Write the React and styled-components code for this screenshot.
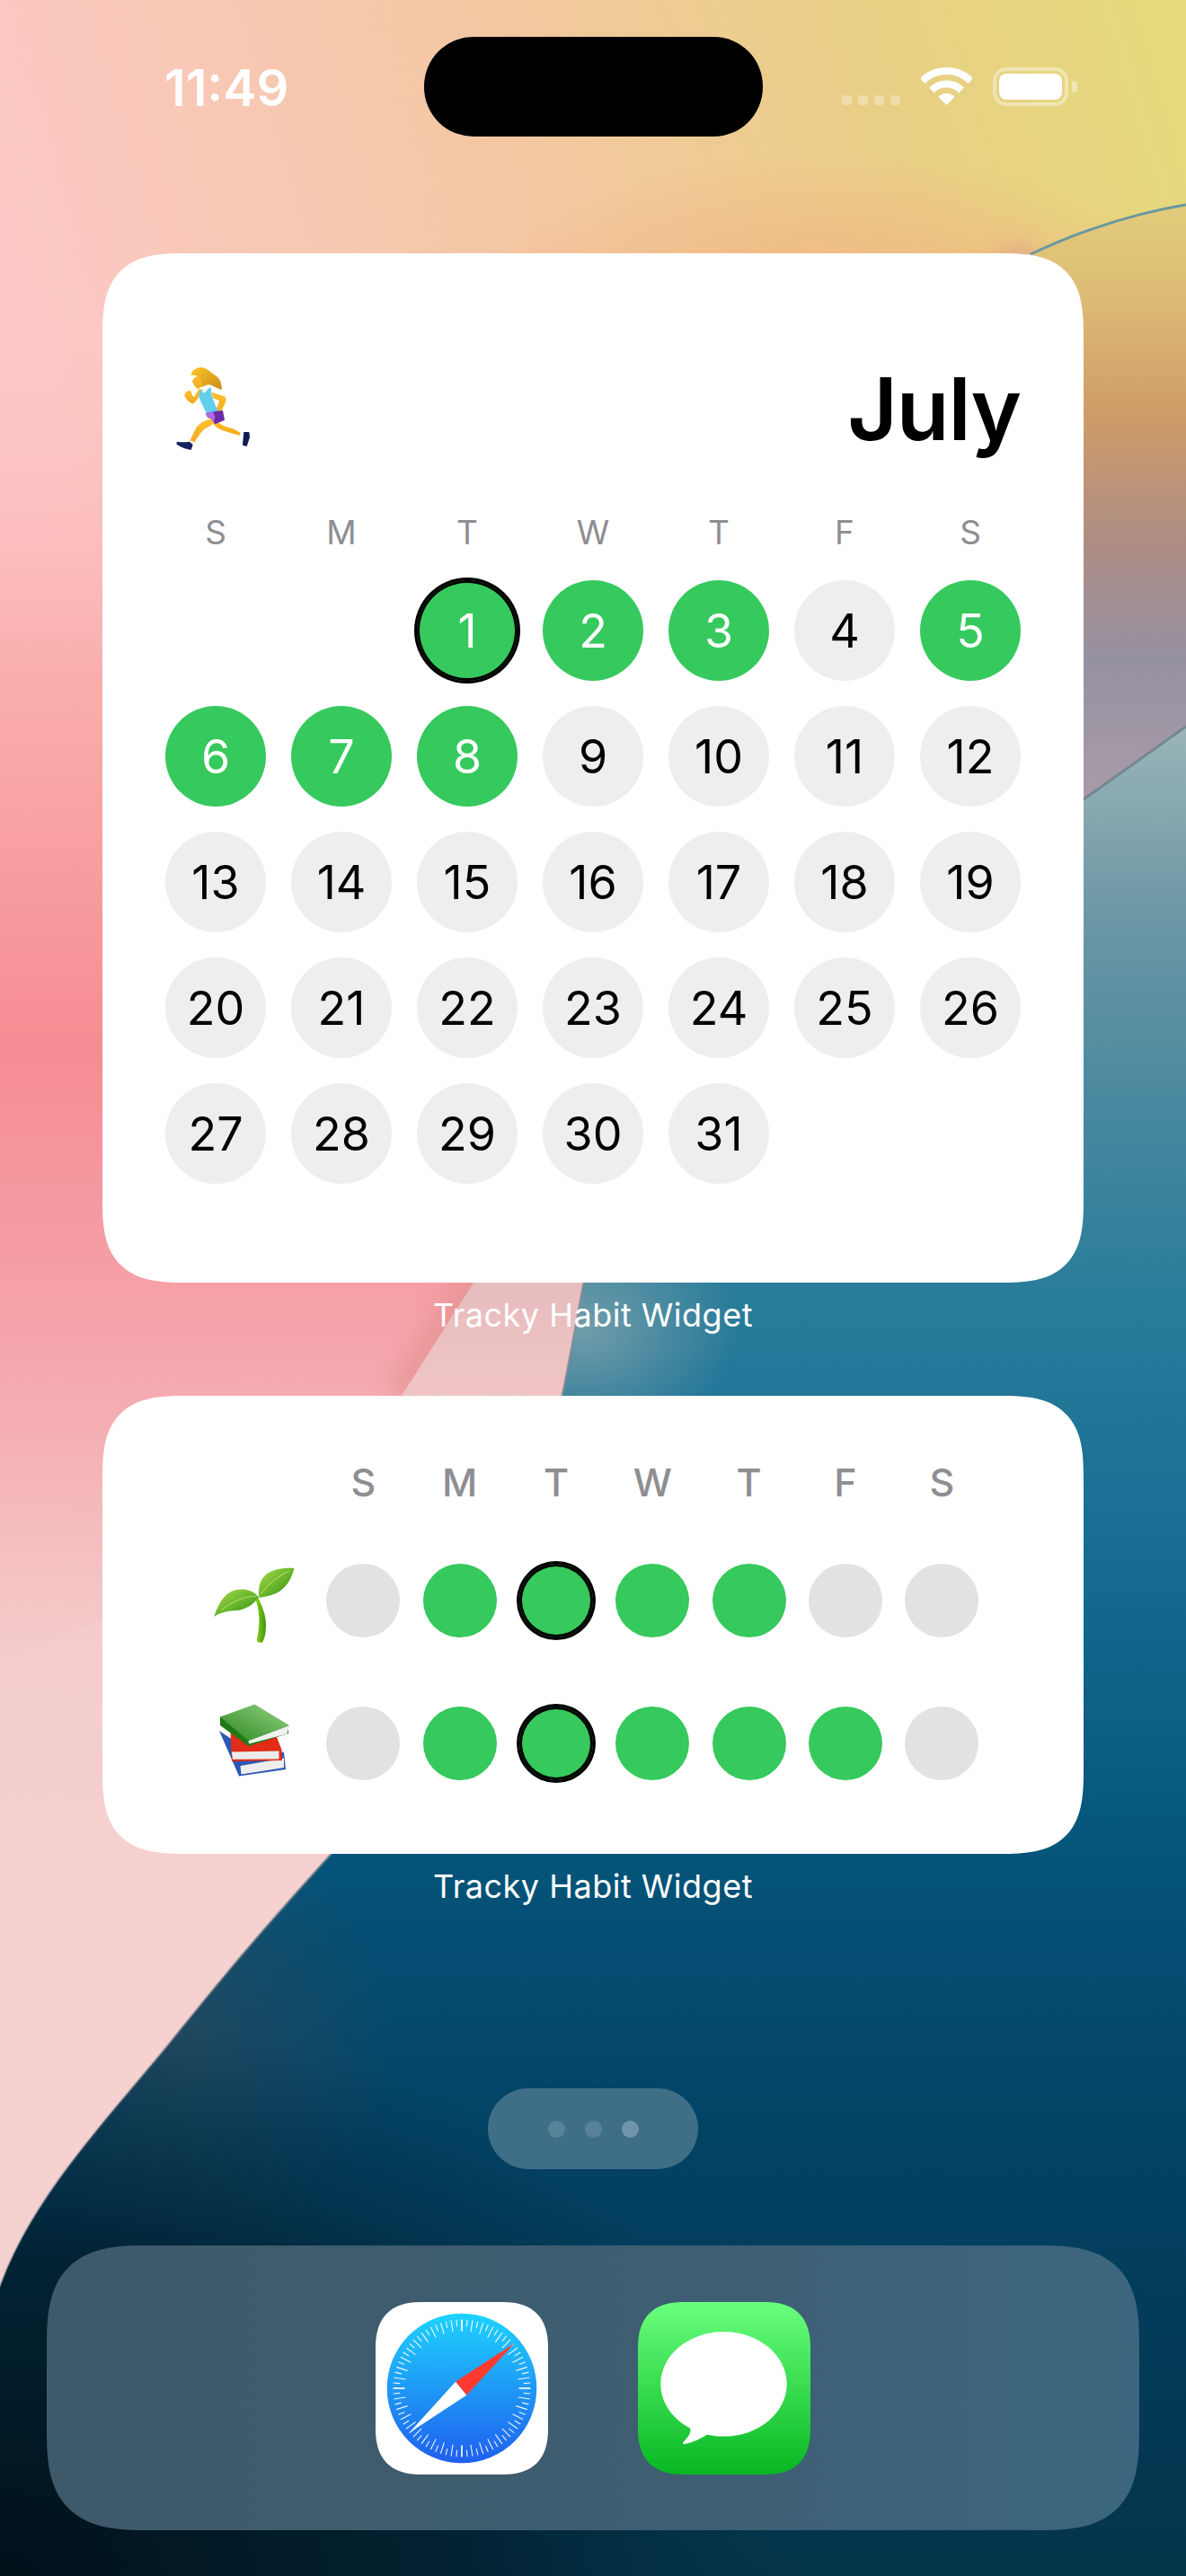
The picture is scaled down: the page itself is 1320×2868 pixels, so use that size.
import React from "react";
import styled, { createGlobalStyle, css } from "styled-components";

const GlobalStyle = createGlobalStyle`
  html, body { margin: 0; padding: 0; background: #000; }
  body { font-family: Inter, "Liberation Sans", sans-serif; }
`;

const Screen = styled.div`
  position: relative;
  width: 1320px;
  height: 2868px;
  overflow: hidden;
  display: flex;
  flex-direction: column;
  align-items: center;
  padding-top: 41px;
  box-sizing: border-box;
`;

const WallpaperSvg = styled.svg`
  position: absolute;
  inset: 0;
  width: 1320px;
  height: 2868px;
`;

const StatusBar = styled.div`
  position: relative;
  width: 1320px;
  height: 111px;
  display: grid;
  grid-template-columns: 1fr 377px 1fr;
`;

const Time = styled.div`
  padding: 32px 0 0 183px;
  font-size: 56px;
  line-height: 50px;
  font-weight: 600;
  color: #fff;
`;

const Island = styled.div`
  background: #000;
  border-radius: 55px;
`;

const StatusIcons = styled.div`
  display: flex;
  align-items: flex-end;
  justify-content: flex-end;
  padding: 0 121px 34px 0;
`;

const SignalBars = styled.div`
  display: flex;
  gap: 7px;
  margin-right: 23px;
  padding-bottom: 1px;
`;

const SignalBar = styled.span`
  width: 11px;
  height: 11px;
  border-radius: 3px;
  background: rgba(255, 255, 255, 0.3);
`;

const WifiIcon = styled.svg`
  width: 57px;
  height: 42px;
  margin-right: 23px;
  margin-bottom: 1px;
`;

const Battery = styled.div`
  position: relative;
  width: 84px;
  height: 43px;
  box-sizing: border-box;
  border: 4px solid rgba(255, 255, 255, 0.4);
  border-radius: 15px;
  padding: 3px;
  margin-right: 10px;
  &::after {
    content: "";
    position: absolute;
    right: -14px;
    top: 11px;
    width: 6px;
    height: 13px;
    border-radius: 0 4px 4px 0;
    background: rgba(255, 255, 255, 0.4);
  }
`;

const BatteryFill = styled.div`
  width: 100%;
  height: 100%;
  border-radius: 8px;
  background: #fff;
`;

const Widget = styled.section`
  position: relative;
  width: 1092px;
  box-sizing: border-box;
  background: #fff;
  border-radius: 80px;
  @supports (corner-shape: squircle) {
    border-radius: 92px;
    corner-shape: superellipse(1.5);
  }
`;

const CalendarWidget = styled(Widget)`
  height: 1146px;
  margin-top: 130px;
  padding: 118px 70px 0;
`;

const HabitWidget = styled(Widget)`
  height: 510px;
  padding: 71px 0 0 124px;
`;

const WidgetLabel = styled.div`
  position: relative;
  height: 126px;
  padding-top: 14px;
  box-sizing: border-box;
  font-size: 36px;
  line-height: 44px;
  font-weight: 400;
  color: #fff;
  text-align: center;
  letter-spacing: 0.5px;
`;

const CalendarHeader = styled.header`
  display: flex;
  justify-content: space-between;
  align-items: center;
  height: 110px;
  padding: 0 0 0 11px;
`;

const Month = styled.h1`
  margin: 0;
  font-size: 96px;
  line-height: 110px;
  font-weight: 600;
  color: #000;
  letter-spacing: -1px;
`;

const RunnerSvg = styled.svg`
  width: 85px;
  height: 95px;
`;

const CalendarGrid = styled.div`
  display: grid;
  grid-template-columns: repeat(7, 112px);
  column-gap: 28px;
`;

const WeekRow = styled(CalendarGrid)`
  height: 107px;
  align-items: center;
  margin-top: 29px;
`;

const WeekLetter = styled.span`
  font-size: 37px;
  line-height: 46px;
  font-weight: 400;
  color: #8e8e93;
  text-align: center;
`;

const DaysGrid = styled(CalendarGrid)`
  row-gap: 28px;
`;

const todayRing = css`
  box-shadow: 0 0 0 3px #000, inset 0 0 0 3px #000;
`;

const Day = styled.div`
  width: 112px;
  height: 112px;
  border-radius: 50%;
  display: flex;
  align-items: center;
  justify-content: center;
  font-size: 52px;
  font-weight: 420;
  background: ${(p) => (p.$done ? "#36c95d" : "#eeeeee")};
  color: ${(p) => (p.$done ? "#fff" : "#000")};
  ${(p) => p.$today && todayRing}
`;

const HabitHeader = styled.div`
  display: grid;
  grid-template-columns: 100px repeat(7, 82px);
  column-gap: 25.33px;
  height: 50px;
  margin-bottom: 66px;
  align-items: center;
`;

const HabitLetter = styled.span`
  font-size: 43px;
  line-height: 50px;
  font-weight: 500;
  color: #8e8e93;
  text-align: center;
`;

const HabitRow = styled.div`
  display: grid;
  grid-template-columns: 100px repeat(7, 82px);
  grid-template-rows: 82px;
  column-gap: 25.33px;
  align-items: center;
  height: 82px;
  margin-bottom: 77px;
`;

const HabitEmoji = styled.svg`
  width: 90px;
  height: 90px;
  align-self: start;
  margin-top: ${(p) => p.$top}px;
`;

const Dot = styled.div`
  width: 82px;
  height: 82px;
  border-radius: 50%;
  background: ${(p) => (p.$done ? "#36c95d" : "#e2e2e2")};
  ${(p) => p.$today && todayRing}
`;

const PagePill = styled.div`
  position: relative;
  margin-top: 135px;
  width: 234px;
  height: 90px;
  border-radius: 45px;
  background: #3f6f87;
  display: flex;
  align-items: center;
  justify-content: center;
  gap: 22px;
`;

const PageDot = styled.span`
  width: 19px;
  height: 19px;
  border-radius: 50%;
  background: ${(p) => (p.$active ? "#7095aa" : "#58829a")};
`;

const Dock = styled.nav`
  position: relative;
  margin-top: 85px;
  width: 1216px;
  height: 317px;
  border-radius: 96px;
  background: linear-gradient(90deg, #3e5a6a 0%, #3e5d70 50%, #3c667f 100%);
  display: flex;
  align-items: center;
  justify-content: center;
  gap: 100px;
  @supports (corner-shape: squircle) {
    border-radius: 112px;
    corner-shape: superellipse(1.5);
  }
`;

const AppIcon = styled.svg`
  width: 192px;
  height: 192px;
  display: block;
`;

const ICON_SHAPE =
  "M50 0 H142 C175 0 192 17 192 50 V142 C192 175 175 192 142 192 H50 C17 192 0 175 0 142 V50 C0 17 17 0 50 0 Z";

const ARC2 = "M1320 228 C1260 238 1200 258 1147 283";
const EDGE2_UPPER = "C800 560 650 1200 527 1428 L447 1554";
const EDGE2_LOWER = "C350 1700 180 1780 0 1850";
const BOUNDARY2 = `${ARC2} ${EDGE2_UPPER} ${EDGE2_LOWER} L0 2868 L1320 2868 Z`;
const EDGE3 =
  "M1320 809 L1206 890 C900 1060 720 1170 650 1428 C642 1470 635 1510 626 1554 C590 1760 480 1940 369 2064 C300 2140 252 2196 185 2280 C110 2370 35 2450 0 2547";
const BOUNDARY3 = `${EDGE3} L0 2868 L1320 2868 Z`;

function Wallpaper() {
  return (
    <WallpaperSvg viewBox="0 0 1320 2868" aria-hidden="true">
      <defs>
        <linearGradient id="base" gradientUnits="userSpaceOnUse" x1="0" y1="420" x2="1320" y2="20">
          <stop offset="0" stopColor="#fdc9c9" />
          <stop offset="0.45" stopColor="#f3c7a2" />
          <stop offset="0.75" stopColor="#e9cf85" />
          <stop offset="1" stopColor="#e4da7a" />
        </linearGradient>
        <linearGradient id="baseFade" gradientUnits="userSpaceOnUse" x1="0" y1="300" x2="0" y2="1850">
          <stop offset="0" stopColor="#fdc9c9" stopOpacity="0" />
          <stop offset="0.3" stopColor="#f9aaa8" stopOpacity="0.9" />
          <stop offset="0.56" stopColor="#f68c93" />
          <stop offset="0.77" stopColor="#f5a4ab" />
          <stop offset="1" stopColor="#f4cdcc" />
        </linearGradient>
        <radialGradient id="peach" gradientUnits="userSpaceOnUse" cx="0" cy="0" r="1" gradientTransform="translate(930 400) scale(460 230)">
          <stop offset="0" stopColor="#f2ae7e" stopOpacity="1" />
          <stop offset="1" stopColor="#f2ae7e" stopOpacity="0" />
        </radialGradient>
        <linearGradient id="layer2" gradientUnits="userSpaceOnUse" x1="0" y1="228" x2="0" y2="2100">
          <stop offset="0" stopColor="#e3cc7c" />
          <stop offset="0.055" stopColor="#dcbb74" />
          <stop offset="0.125" stopColor="#cf9b68" />
          <stop offset="0.2" stopColor="#ae8d84" />
          <stop offset="0.27" stopColor="#9691a1" />
          <stop offset="0.64" stopColor="#e6bcbe" />
          <stop offset="0.72" stopColor="#f2c6c6" />
          <stop offset="0.87" stopColor="#f4cdcc" />
          <stop offset="1" stopColor="#f5d1d0" />
        </linearGradient>
        <linearGradient id="layer3" gradientUnits="userSpaceOnUse" x1="0" y1="809" x2="0" y2="2868">
          <stop offset="0" stopColor="#9ab5b8" />
          <stop offset="0.1" stopColor="#6d97a5" />
          <stop offset="0.2" stopColor="#4a899f" />
          <stop offset="0.3" stopColor="#2b7d9b" />
          <stop offset="0.42" stopColor="#1a7095" />
          <stop offset="0.6" stopColor="#06567b" />
          <stop offset="0.72" stopColor="#03466a" />
          <stop offset="0.84" stopColor="#033d5c" />
          <stop offset="1" stopColor="#04344a" />
        </linearGradient>
        <radialGradient id="tealGlow" gradientUnits="userSpaceOnUse" cx="0" cy="0" r="1" gradientTransform="translate(650 1480) scale(170 130)">
          <stop offset="0" stopColor="#8aa8ae" stopOpacity="0.75" />
          <stop offset="1" stopColor="#8aa8ae" stopOpacity="0" />
        </radialGradient>
        <radialGradient id="darkCorner" gradientUnits="userSpaceOnUse" cx="0" cy="0" r="1" gradientTransform="translate(0 2868) scale(900 640)">
          <stop offset="0" stopColor="#01111a" stopOpacity="1" />
          <stop offset="0.55" stopColor="#021d2c" stopOpacity="0.85" />
          <stop offset="1" stopColor="#032a40" stopOpacity="0" />
        </radialGradient>
        <radialGradient id="greyEdge" gradientUnits="userSpaceOnUse" cx="0" cy="0" r="1" gradientTransform="translate(200 2270) scale(240 240)">
          <stop offset="0" stopColor="#3a4a56" stopOpacity="0.55" />
          <stop offset="1" stopColor="#3a4a56" stopOpacity="0" />
        </radialGradient>
        <filter id="soft" x="-20%" y="-20%" width="140%" height="140%">
          <feGaussianBlur stdDeviation="14" />
        </filter>
      </defs>
      <rect width="1320" height="2868" fill="url(#base)" />
      <rect width="1320" height="2868" fill="url(#peach)" />
      <rect width="1320" height="2868" fill="url(#baseFade)" />
      <path d={`M1147 283 ${EDGE2_UPPER}`} fill="none" stroke="#e4908f" strokeWidth="36" opacity="0.7" filter="url(#soft)" />
      <path d={BOUNDARY2} fill="url(#layer2)" />
      <path d={ARC2} fill="none" stroke="#6b98a0" strokeWidth="3" />
      <path d={BOUNDARY3} fill="url(#layer3)" />
      <path d={EDGE3} fill="none" stroke="#55707e" strokeWidth="3" opacity="0.55" />
      <path d={BOUNDARY3} fill="url(#tealGlow)" />
      <path d={BOUNDARY3} fill="url(#greyEdge)" />
      <path d={BOUNDARY3} fill="url(#darkCorner)" />
    </WallpaperSvg>
  );
}

function Runner() {
  return (
    <RunnerSvg viewBox="225 75 255 285" aria-hidden="true">
      <defs>
        <linearGradient id="hair" x1="0" y1="0" x2="1" y2="1">
          <stop offset="0" stopColor="#fdc722" />
          <stop offset="1" stopColor="#c98a1b" />
        </linearGradient>
        <linearGradient id="skin" x1="0" y1="0" x2="0" y2="1">
          <stop offset="0" stopColor="#fcc22e" />
          <stop offset="1" stopColor="#f3a91f" />
        </linearGradient>
      </defs>
      <path d="M352 248 C330 252 304 262 294 282 C286 298 280 312 274 324 L288 330 C298 314 308 298 322 284 C336 276 352 268 362 260 Z" fill="url(#skin)" />
      <path d="M362 256 C376 270 392 276 414 282 C426 286 436 292 444 298 L440 306 C424 300 404 296 388 290 C376 286 362 280 352 268 Z" fill="url(#skin)" />
      <path d="M274 322 L288 326 L283 336 L270 332 Z" fill="#f4f4f4" />
      <path d="M444 292 L452 296 L448 308 L440 304 Z" fill="#f4f4f4" />
      <path d="M231 326 C240 328 262 328 272 326 L284 336 L278 354 C262 352 240 344 229 334 Z" fill="#14235f" />
      <path d="M454 294 L472 294 L474 312 L464 342 L450 338 L452 316 Z" fill="#0f1c52" />
      <path d="M346 160 C360 166 378 170 392 176 C398 186 392 200 384 212 L376 232 L360 226 L370 196 L372 190 L350 180 Z" fill="url(#skin)" />
      <path d="M318 152 C308 170 298 190 284 200 C272 196 262 186 256 174 C256 160 270 152 278 158 L282 172 L288 178 L304 150 Z" fill="url(#skin)" />
      <circle cx="368" cy="224" r="12" fill="#f8b62a" />
      <path d="M310 152 L322 164 L335 150 L344 144 L346 168 C352 190 362 212 370 226 L330 232 C320 212 310 192 304 176 C304 168 306 160 310 152 Z" fill="#62cdec" />
      <path d="M326 232 L352 226 L384 222 L390 254 L358 268 L346 250 L334 246 Z" fill="#6b2aa6" />
      <path d="M326 232 L352 226 L358 244 L352 262 L346 248 L332 244 Z" fill="#b06ae6" />
      <path d="M296 108 L318 112 L318 140 L300 150 L290 140 L282 126 L288 114 Z" fill="url(#skin)" />
      <path d="M277 104 C282 84 304 74 322 80 C338 86 350 100 358 104 C372 112 382 128 380 154 C368 148 354 142 340 136 C328 136 322 140 316 144 C314 128 310 114 296 106 C290 104 284 104 277 104 Z" fill="url(#hair)" />
    </RunnerSvg>
  );
}

function Sprout() {
  return (
    <HabitEmoji $top={4} viewBox="0 0 90 90" aria-hidden="true">
      <defs>
        <linearGradient id="leaf" x1="0" y1="0" x2="1" y2="1">
          <stop offset="0" stopColor="#a9dd48" />
          <stop offset="1" stopColor="#2f8f10" />
        </linearGradient>
        <linearGradient id="stem" x1="0" y1="0" x2="1" y2="0">
          <stop offset="0" stopColor="#8ed41c" />
          <stop offset="1" stopColor="#3f960d" />
        </linearGradient>
      </defs>
      <path d="M49 33 C53 42 58 52 58 64 C58 72 57 78 54.5 83 C51 85 48 83 47.8 81 C50 72 51 60 50 52 C49.5 44 47 38 46 34 Z" fill="url(#stem)" />
      <path d="M0 55 C5 42 10 30 23 25.5 C33 23 43 25 50 33 C44 42 36 46 27 48 C17 48 8 50 0 55 Z" fill="url(#leaf)" />
      <path d="M89.5 1 C86 14 80 24 69 29 C62 32 55 33 50.5 34 C49 25 50 15 58 8 C66 2 78 0 89.5 1 Z" fill="url(#leaf)" />
      <path d="M8 48 C20 38 34 32 48 32" stroke="#d5ef96" strokeWidth="1" fill="none" opacity="0.7" />
      <path d="M52 30 C60 20 70 10 84 4" stroke="#d5ef96" strokeWidth="1" fill="none" opacity="0.7" />
    </HabitEmoji>
  );
}

function Books() {
  return (
    <HabitEmoji $top={-3} viewBox="-6 0 90 90" aria-hidden="true">
      <defs>
        <linearGradient id="greenBook" x1="0" y1="1" x2="1" y2="0">
          <stop offset="0" stopColor="#2c8820" />
          <stop offset="1" stopColor="#93d382" />
        </linearGradient>
      </defs>
      <path d="M0 30 L22 80.5 L74 73 L72 54 L30 50 Z" fill="#2f57b5" />
      <path d="M23.5 69 L72 60.5 L72 71 L24.5 78.5 Z" fill="#eeeeee" />
      <path d="M12.5 30 L64 37 L69.5 51 L70 63 L14 64 Z" fill="#e22c17" />
      <path d="M13.8 53.5 L66.5 52.5 L66.5 61.5 L15 61.8 Z" fill="#ececec" />
      <path d="M1 14 L1 24 L32.5 47 L77 33 L77 24 L32.5 39 Z" fill="#1f7a16" />
      <path d="M32.5 41 L78 24 L75.5 33.5 L33 44.5 Z" fill="#f0f0f0" />
      <path d="M1 14.5 L39.5 0.5 L78 24 L32.5 41 Z" fill="url(#greenBook)" />
    </HabitEmoji>
  );
}

function Safari() {
  const ticks = [];
  for (let i = 0; i < 80; i += 1) {
    const a = (i * 4.5 * Math.PI) / 180;
    const long = i % 2 === 0;
    const r1 = 76.5;
    const r2 = long ? 63.5 : 69;
    ticks.push(
      <line
        key={i}
        x1={96 + r1 * Math.sin(a)}
        y1={96 - r1 * Math.cos(a)}
        x2={96 + r2 * Math.sin(a)}
        y2={96 - r2 * Math.cos(a)}
        stroke="#fff"
        strokeWidth={i % 20 === 0 ? 1.8 : 1.1}
        opacity="0.92"
      />
    );
  }
  return (
    <AppIcon viewBox="0 0 192 192" aria-label="Safari">
      <defs>
        <linearGradient id="safariDisc" x1="0" y1="0" x2="0" y2="1">
          <stop offset="0" stopColor="#1ed3fd" />
          <stop offset="1" stopColor="#1f5fee" />
        </linearGradient>
      </defs>
      <path d={ICON_SHAPE} fill="#fff" />
      <circle cx="96" cy="96" r="83.3" fill="url(#safariDisc)" />
      {ticks}
      <polygon points="154.7,45.7 89,88.7 101.3,103.7" fill="#ff3b30" />
      <polygon points="37.3,145.7 89,88.7 101.3,103.7" fill="#fff" />
    </AppIcon>
  );
}

function Messages() {
  return (
    <AppIcon viewBox="0 0 192 192" aria-label="Messages">
      <defs>
        <linearGradient id="msgBg" x1="0" y1="0" x2="0" y2="1">
          <stop offset="0" stopColor="#69ff7d" />
          <stop offset="1" stopColor="#07b722" />
        </linearGradient>
      </defs>
      <path d={ICON_SHAPE} fill="url(#msgBg)" />
      <ellipse cx="95.5" cy="91.3" rx="70.2" ry="58.3" fill="#fff" />
      <path d="M50 130 C54 136 58 138 58.5 142 C58.5 148 54 152 50.5 156 C49.5 158 50.5 158.5 52 158 C62 156 70 152 77 147.5 L85 130 Z" fill="#fff" />
    </AppIcon>
  );
}

const WEEK = ["S", "M", "T", "W", "T", "F", "S"];
const DONE_DAYS = new Set([1, 2, 3, 5, 6, 7, 8]);
const DAYS = Array.from({ length: 31 }, (_, i) => i + 1);
const HABITS = [
  { id: "sprout", Icon: Sprout, done: [0, 1, 1, 1, 1, 0, 0] },
  { id: "books", Icon: Books, done: [0, 1, 1, 1, 1, 1, 0] },
];

export default function App() {
  return (
    <Screen>
      <GlobalStyle />
      <Wallpaper />
      <StatusBar>
        <Time>11:49</Time>
        <Island />
        <StatusIcons>
          <SignalBars>
            <SignalBar />
            <SignalBar />
            <SignalBar />
            <SignalBar />
          </SignalBars>
          <WifiIcon viewBox="0 0 57 42" aria-hidden="true">
            <path d="M1.6 15.1 A38 38 0 0 1 55.4 15.1" fill="none" stroke="#fff" strokeWidth="8" />
            <path d="M11.9 25.4 A23.5 23.5 0 0 1 45.1 25.4" fill="none" stroke="#fff" strokeWidth="8" />
            <path d="M28.5 42 L19.3 32.8 A13 13 0 0 1 37.7 32.8 Z" fill="#fff" />
          </WifiIcon>
          <Battery>
            <BatteryFill />
          </Battery>
        </StatusIcons>
      </StatusBar>

      <CalendarWidget>
        <CalendarHeader>
          <Runner />
          <Month>July</Month>
        </CalendarHeader>
        <WeekRow>
          {WEEK.map((d, i) => (
            <WeekLetter key={i}>{d}</WeekLetter>
          ))}
        </WeekRow>
        <DaysGrid>
          <span />
          <span />
          {DAYS.map((d) => (
            <Day key={d} $done={DONE_DAYS.has(d)} $today={d === 1}>
              {d}
            </Day>
          ))}
        </DaysGrid>
      </CalendarWidget>
      <WidgetLabel>Tracky Habit Widget</WidgetLabel>

      <HabitWidget>
        <HabitHeader>
          <span />
          {WEEK.map((d, i) => (
            <HabitLetter key={i}>{d}</HabitLetter>
          ))}
        </HabitHeader>
        {HABITS.map(({ id, Icon, done }) => (
          <HabitRow key={id}>
            <Icon />
            {done.map((v, i) => (
              <Dot key={i} $done={!!v} $today={i === 2} />
            ))}
          </HabitRow>
        ))}
      </HabitWidget>
      <WidgetLabel>Tracky Habit Widget</WidgetLabel>

      <PagePill>
        <PageDot />
        <PageDot />
        <PageDot $active />
      </PagePill>

      <Dock>
        <Safari />
        <Messages />
      </Dock>
    </Screen>
  );
}
